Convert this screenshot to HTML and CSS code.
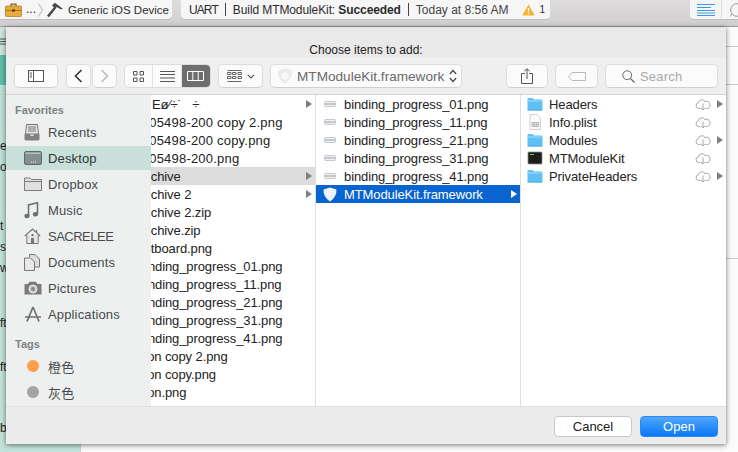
FILE: index.html
```html
<!DOCTYPE html>
<html lang="en">
<head>
    <meta charset="UTF-8">
    <title>Choose items to add</title>
    <link rel="stylesheet" href="styles.css">
</head>
<body>
<svg class="defs" width="0" height="0">
    <symbol id="folder" viewBox="0 0 16 14">
        <path d="M0.5 2.2 Q0.5 1 1.7 1 H5.6 L7 2.4 H14.4 Q15.5 2.4 15.5 3.5 V12.3 Q15.5 13.4 14.4 13.4 H1.6 Q0.5 13.4 0.5 12.3 Z" fill="#5fc0f3"/>
        <path d="M0.5 4 H15.5" stroke="#a5def9" stroke-width="1"/>
        <path d="M0.5 13 H15.5" stroke="#3fa3db" stroke-width="0.8"/>
    </symbol>
    <symbol id="cloud" viewBox="0 0 16 13">
        <path d="M5.2 10.5 H3.6 A2.9 2.9 0 0 1 3.3 4.8 A3.6 3.6 0 0 1 10 3.6 A3.2 3.2 0 0 1 12.6 10.5 H10.8" fill="none" stroke="#a6a6a6"/>
        <path d="M8 5.5 V12 M5.8 9.8 L8 12 L10.2 9.8" fill="none" stroke="#a6a6a6"/>
    </symbol>
    <symbol id="thumb" viewBox="0 0 12 6">
        <rect x="0.5" y="0.5" width="11" height="5" rx="1" fill="#eef1f5" stroke="#b4b4b4" stroke-width="0.7"/>
        <path d="M1 3 H11" stroke="#9aa0a8"/>
    </symbol>
</svg>

<div class="screen">
    <header class="xcode-bar">
        <div class="scheme-pill">
            <svg class="toolbox" width="17" height="14" viewBox="0 0 17 14">
                <path d="M6 3 V1.2 H11 V3" fill="none" stroke="#7d5a1c" stroke-width="1.2"/>
                <rect x="0.5" y="3" width="16" height="10.5" rx="1" fill="#e8aa3a" stroke="#a8781f" stroke-width="0.7"/>
                <path d="M0.5 7.5 H16.5" stroke="#a8781f"/>
                <rect x="7" y="6.2" width="3" height="2.6" fill="#6b4a14"/>
            </svg>
            <span class="crumb-dots">...</span>
            <svg class="crumb-sep" width="5" height="14" viewBox="0 0 5 14">
                <path d="M0.5 0.5 L4.5 7 L0.5 13.5" fill="none" stroke="#b5b5b5"/>
            </svg>
            <svg class="hammer" width="16" height="16" viewBox="0 0 16 16">
                <path d="M1 14.5 L8.5 5" stroke="#4a4a4a" stroke-width="2.4" fill="none"/>
                <path d="M5 3.2 L8 0.8 L15.5 6.5 L14.2 7.6 L9.5 5 L8 6.6 Z" fill="#4a4a4a"/>
            </svg>
            <span class="scheme-name">Generic iOS Device</span>
        </div>
        <div class="status-pill">
            <span class="status-target">UART</span>
            <i class="status-sep"></i>
            <span class="status-build">Build MTModuleKit: <b>Succeeded</b></span>
            <i class="status-sep"></i>
            <span class="status-time">Today at 8:56 AM</span>
            <svg class="warn" width="13" height="12" viewBox="0 0 13 12">
                <path d="M6.5 0.5 L12.8 11.5 H0.2 Z" fill="#f5b32e"/>
                <path d="M6.5 4 V8 M6.5 9 V10.3" stroke="#fff" stroke-width="1.3"/>
            </svg>
            <span class="warn-count">1</span>
        </div>
        <div class="editor-seg">
            <div class="editor-seg-item">
                <svg width="18" height="12" viewBox="0 0 18 12">
                    <path d="M0 .5 H18 M0 3.5 H14 M0 6.5 H18 M0 9 H18 M0 11.5 H18" stroke="#3f95ea"/>
                </svg>
            </div>
            <div class="editor-seg-item">
                <svg width="14" height="14" viewBox="0 0 14 14">
                    <circle cx="9" cy="7" r="6.3" fill="none" stroke="#999"/>
                    <path d="M4 11 L2 13.5" stroke="#999"/>
                </svg>
            </div>
        </div>
    </header>

    <div class="workspace">
        <aside class="nav-panel">
            <div class="nav-filter">
                <svg width="6" height="7" viewBox="0 0 6 7"><path d="M0 1 H6 M0 3.5 H6 M0 6 H6" stroke="#555"/></svg>
            </div>
            <div class="nav-current"></div>
            <div class="nav-frag frag-e">e</div>
            <div class="nav-frag">ol</div>
            <div class="nav-frag frag-t">t</div>
            <div class="nav-frag">sw</div>
            <div class="nav-frag">w</div>
            <div class="nav-frag frag-ft">ft</div>
            <div class="nav-frag frag-ft2">ft</div>
            <div class="nav-frag frag-b">b</div>
        </aside>
        <main class="editor">
            <div class="editor-line line-a"></div>
            <div class="editor-line line-b"></div>
            <div class="editor-line line-c"></div>
        </main>
    </div>

    <section class="dialog">
        <div class="dialog-title">Choose items to add:</div>

        <div class="toolbar">
            <div class="tool-btn btn-sidebar">
                <svg width="16" height="12" viewBox="0 0 16 12">
                    <rect x="0.5" y="0.5" width="15" height="11" fill="#fff" stroke="#555"/>
                    <path d="M5.5 0.5 V11.5 M1.8 3 H4 M1.8 5 H4 M1.8 7 H4" stroke="#555"/>
                </svg>
            </div>
            <div class="nav-pair">
                <div class="tool-btn btn-nav">
                    <svg width="9" height="14" viewBox="0 0 9 14"><path d="M7.5 1 L1.5 7 L7.5 13" fill="none" stroke="#333" stroke-width="1.6"/></svg>
                </div>
                <div class="tool-btn btn-nav">
                    <svg width="9" height="14" viewBox="0 0 9 14"><path d="M1.5 1 L7.5 7 L1.5 13" fill="none" stroke="#bbb" stroke-width="1.6"/></svg>
                </div>
            </div>
            <div class="view-seg">
                <div class="view-item">
                    <svg width="11" height="11" viewBox="0 0 11 11">
                        <path d="M.5 .5 H4 V4 H.5 Z M7 .5 H10.5 V4 H7 Z M.5 7 H4 V10.5 H.5 Z M7 7 H10.5 V10.5 H7 Z" fill="none" stroke="#555"/>
                    </svg>
                </div>
                <div class="view-item">
                    <svg width="15" height="11" viewBox="0 0 15 11"><path d="M0 .5 H15 M0 3.5 H15 M0 7 H15 M0 10.5 H15" stroke="#555"/></svg>
                </div>
                <div class="view-item view-active">
                    <svg width="17" height="10" viewBox="0 0 17 10">
                        <path d="M.5 .5 H16.5 V9.5 H.5 Z M5.8 .5 V9.5 M11.2 .5 V9.5" fill="none" stroke="#fff"/>
                    </svg>
                </div>
            </div>
            <div class="tool-btn btn-arrange">
                <svg width="15" height="12" viewBox="0 0 15 12">
                    <path d="M.5 .5 H14.5 M.5 2.5 H4 V4.5 H.5 Z M5.5 2.5 H9 V4.5 H5.5 Z M11 2.5 H14.5 V4.5 H11 Z M.5 6.5 H4 V8.5 H.5 Z M5.5 6.5 H9 V8.5 H5.5 Z M11 6.5 H14.5 V8.5 H11 Z M.5 11.5 H14.5" fill="none" stroke="#666"/>
                </svg>
                <svg width="8" height="5" viewBox="0 0 8 5"><path d="M.8 .8 L4 4 L7.2 .8" fill="none" stroke="#555" stroke-width="1.2"/></svg>
            </div>
            <div class="tool-btn btn-path">
                <svg width="16" height="16" viewBox="0 0 16 16">
                    <path d="M8 1 L14.5 3.5 Q14.5 11 8 15 Q1.5 11 1.5 3.5 Z" fill="#ececec" stroke="#e4e4e4"/>
                    <path d="M8 4 L11.5 6 V10 L8 12 L4.5 10 V6 Z" fill="#f8f8f8"/>
                </svg>
                <span class="path-name">MTModuleKit.framework</span>
                <svg class="updown" width="8" height="14" viewBox="0 0 8 14">
                    <path d="M.8 5 L4 1.5 L7.2 5 M.8 9 L4 12.5 L7.2 9" fill="none" stroke="#444" stroke-width="1.2"/>
                </svg>
            </div>
            <div class="tool-btn btn-share">
                <svg width="12" height="16" viewBox="0 0 12 16">
                    <path d="M4 5.5 H.5 V15.5 H11.5 V5.5 H8" fill="none" stroke="#555"/>
                    <path d="M6 11 V.8 M3.4 3.2 L6 .8 L8.6 3.2" fill="none" stroke="#555"/>
                </svg>
            </div>
            <div class="tool-btn btn-tag">
                <svg width="18" height="9" viewBox="0 0 18 9">
                    <path d="M4 .5 H17.5 V8.5 H4 L.5 4.5 Z" fill="none" stroke="#bbb"/>
                </svg>
            </div>
            <div class="tool-btn btn-search">
                <svg width="13" height="13" viewBox="0 0 13 13">
                    <circle cx="5.2" cy="5.2" r="4.4" fill="none" stroke="#666"/>
                    <path d="M8.4 8.4 L12.5 12.5" stroke="#666" stroke-width="1.3"/>
                </svg>
                <span class="search-hint">Search</span>
            </div>
        </div>

        <div class="browser">
            <nav class="sidebar">
                <div class="side-head">Favorites</div>
                <div class="side-row">
                    <svg class="side-icon" width="16" height="17" viewBox="0 0 16 17">
                        <path d="M2.5 .5 H13.5 L14.5 10 H1.5 Z" fill="#e4e4e4" stroke="#777"/>
                        <path d="M4 3 H12 M4 5 H12 M4 7 H12" stroke="#777"/>
                        <path d="M.5 10 H5.5 Q6 12 8 12 Q10 12 10.5 10 H15.5 V15 Q15.5 16.5 14 16.5 H2 Q.5 16.5 .5 15 Z" fill="#808080"/>
                    </svg>
                    <span>Recents</span>
                </div>
                <div class="side-row side-active">
                    <svg class="side-icon" width="18" height="14" viewBox="0 0 18 14">
                        <rect x="0.5" y="0.5" width="17" height="13" rx="1.5" fill="#84908d" stroke="#5f6a68"/>
                        <rect x="1.5" y="1.5" width="15" height="1.5" fill="#b4c0bd"/>
                        <path d="M7 11 H8 M9 11 H10 M11 11 H12" stroke="#e8e8e8"/>
                    </svg>
                    <span>Desktop</span>
                </div>
                <div class="side-row">
                    <svg class="side-icon" width="18" height="14" viewBox="0 0 18 14">
                        <path d="M.5 13.5 V1 H6 L7.5 2.5 H17.5 V13.5 Z" fill="#e0e0e0" stroke="#7d7d7d"/>
                        <path d="M.5 4.5 H17.5" stroke="#7d7d7d"/>
                    </svg>
                    <span>Dropbox</span>
                </div>
                <div class="side-row">
                    <svg class="side-icon" width="15" height="17" viewBox="0 0 15 17">
                        <path d="M4.5 14 V3 L13.5 .8 V12" fill="none" stroke="#707070" stroke-width="1.6"/>
                        <ellipse cx="3" cy="14" rx="2.6" ry="2.3" fill="#707070"/>
                        <ellipse cx="11.5" cy="12.3" rx="2.6" ry="2.3" fill="#707070"/>
                    </svg>
                    <span>Music</span>
                </div>
                <div class="side-row">
                    <svg class="side-icon" width="17" height="16" viewBox="0 0 17 16">
                        <path d="M.8 8 L8.5 1 L16.2 8 M12.5 2 V4.5" fill="none" stroke="#777" stroke-width="1.2"/>
                        <path d="M2.8 7 V15.5 H14.2 V7" fill="#e6e6e6" stroke="#777"/>
                        <rect x="7" y="10" width="3" height="5.5" fill="#777"/>
                        <circle cx="8.5" cy="7" r="1.2" fill="#777"/>
                    </svg>
                    <span class="side-caps">SACRELEE</span>
                </div>
                <div class="side-row">
                    <svg class="side-icon" width="16" height="17" viewBox="0 0 16 17">
                        <path d="M5.5 3 V.5 H11 L15.5 5 V13 H11" fill="#ddd" stroke="#777"/>
                        <path d="M.5 4 H6.5 L10.5 8 V16.5 H.5 Z" fill="#e8e8e8" stroke="#777"/>
                    </svg>
                    <span>Documents</span>
                </div>
                <div class="side-row">
                    <svg class="side-icon" width="18" height="14" viewBox="0 0 18 14">
                        <path d="M.5 3 H4 L5.5 .8 H12 L13.5 3 H17.5 V13.5 H.5 Z" fill="#7b7b7b"/>
                        <circle cx="9" cy="8" r="4" fill="#c9c9c9" stroke="#eee"/>
                        <circle cx="9" cy="8" r="2" fill="#8a8a8a"/>
                    </svg>
                    <span>Pictures</span>
                </div>
                <div class="side-row">
                    <svg class="side-icon" width="18" height="16" viewBox="0 0 18 16">
                        <path d="M9 1 L3 15.5 M9 1 L15 15.5 M1 11 H17" fill="none" stroke="#707070" stroke-width="1.7"/>
                    </svg>
                    <span>Applications</span>
                </div>
                <div class="side-head side-head-tags">Tags</div>
                <div class="side-row">
                    <i class="tag-dot dot-orange"></i>
                    <span class="cjk">橙色</span>
                </div>
                <div class="side-row">
                    <i class="tag-dot dot-gray"></i>
                    <span class="cjk">灰色</span>
                </div>
            </nav>

            <div class="column col-scrolled">
                <div class="file-row"><span class="name">&nbsp;&nbsp;&nbsp;&nbsp;Eø⁄÷˙&nbsp;&nbsp;&nbsp;÷</span><i class="arrow"></i></div>
                <div class="file-row"><span class="name name-long">&nbsp;105498-200 copy 2.png</span></div>
                <div class="file-row"><span class="name name-long">&nbsp;105498-200 copy.png</span></div>
                <div class="file-row"><span class="name name-long">&nbsp;105498-200.png</span></div>
                <div class="file-row row-parent"><span class="name">Archive</span><i class="arrow"></i></div>
                <div class="file-row"><span class="name">Archive 2</span><i class="arrow"></i></div>
                <div class="file-row"><span class="name">Archive 2.zip</span></div>
                <div class="file-row"><span class="name">Archive.zip</span></div>
                <div class="file-row"><span class="name">Artboard.png</span></div>
                <div class="file-row"><span class="name">binding_progress_01.png</span></div>
                <div class="file-row"><span class="name">binding_progress_11.png</span></div>
                <div class="file-row"><span class="name">binding_progress_21.png</span></div>
                <div class="file-row"><span class="name">binding_progress_31.png</span></div>
                <div class="file-row"><span class="name">binding_progress_41.png</span></div>
                <div class="file-row"><span class="name">icon copy 2.png</span></div>
                <div class="file-row"><span class="name">icon copy.png</span></div>
                <div class="file-row"><span class="name">icon.png</span></div>
            </div>

            <div class="column">
                <div class="file-row"><svg class="file-thumb" width="12" height="6"><use href="#thumb"/></svg><span class="name">binding_progress_01.png</span></div>
                <div class="file-row"><svg class="file-thumb" width="12" height="6"><use href="#thumb"/></svg><span class="name">binding_progress_11.png</span></div>
                <div class="file-row"><svg class="file-thumb" width="12" height="6"><use href="#thumb"/></svg><span class="name">binding_progress_21.png</span></div>
                <div class="file-row"><svg class="file-thumb" width="12" height="6"><use href="#thumb"/></svg><span class="name">binding_progress_31.png</span></div>
                <div class="file-row"><svg class="file-thumb" width="12" height="6"><use href="#thumb"/></svg><span class="name">binding_progress_41.png</span></div>
                <div class="file-row row-selected">
                    <svg class="file-icon-fw" width="14" height="15" viewBox="0 0 14 15">
                        <path d="M7 .5 L13.5 2.5 Q13.8 10 7 14.5 Q.2 10 .5 2.5 Z" fill="#eef3fa"/>
                    </svg>
                    <span class="name">MTModuleKit.framework</span>
                    <i class="arrow"></i>
                </div>
            </div>

            <div class="column col-last">
                <div class="item-row">
                    <svg class="item-icon" width="16" height="14"><use href="#folder"/></svg>
                    <span class="name">Headers</span>
                    <svg class="cloud" width="16" height="13"><use href="#cloud"/></svg>
                    <i class="arrow"></i>
                </div>
                <div class="item-row">
                    <svg class="item-icon" width="16" height="16" viewBox="0 0 16 16">
                        <path d="M3 .5 H10 L13.5 4 V15.5 H3 Z" fill="#fafafa" stroke="#cfcfcf"/>
                        <path d="M5 8.5 H11.5 V12.5 H5 Z M7.2 8.5 V12.5 M9.4 8.5 V12.5 M5 10.5 H11.5" fill="none" stroke="#b5b5b5"/>
                    </svg>
                    <span class="name">Info.plist</span>
                    <svg class="cloud" width="16" height="13"><use href="#cloud"/></svg>
                </div>
                <div class="item-row">
                    <svg class="item-icon" width="16" height="14"><use href="#folder"/></svg>
                    <span class="name">Modules</span>
                    <svg class="cloud" width="16" height="13"><use href="#cloud"/></svg>
                    <i class="arrow"></i>
                </div>
                <div class="item-row">
                    <svg class="item-icon" width="16" height="14" viewBox="0 0 16 14">
                        <rect x="1" y="1" width="14" height="12" rx="1" fill="#1c1c1c" stroke="#8a8a8a" stroke-width="0.8"/>
                        <path d="M3 3.5 H7" stroke="#5fd069"/>
                    </svg>
                    <span class="name">MTModuleKit</span>
                    <svg class="cloud" width="16" height="13"><use href="#cloud"/></svg>
                </div>
                <div class="item-row">
                    <svg class="item-icon" width="16" height="14"><use href="#folder"/></svg>
                    <span class="name">PrivateHeaders</span>
                    <svg class="cloud" width="16" height="13"><use href="#cloud"/></svg>
                    <i class="arrow"></i>
                </div>
            </div>
        </div>

        <footer class="dialog-foot">
            <button class="foot-btn btn-cancel" type="button">Cancel</button>
            <button class="foot-btn btn-open" type="button">Open</button>
        </footer>
    </section>
</div>
</body>
</html>
```

FILE: styles.css
```css
* {
    box-sizing: border-box;
}

html, body {
    margin: 0;
    padding: 0;
}

body {
    font-family: 'Liberation Sans', Arial, sans-serif;
    font-size: 13px;
    color: #2b2b2b;
    background: #fff;
}

.defs {
    position: absolute;
}

.screen {
    position: relative;
    width: 738px;
    height: 452px;
    overflow: hidden;
    display: flex;
    flex-direction: column;
}

/* Xcode window behind the sheet */
.xcode-bar {
    height: 27px;
    flex: none;
    display: flex;
    align-items: flex-start;
    background: linear-gradient(#dedcdc, #d0cece);
    border-bottom: 1px solid #9a9a9a;
    font-size: 12px;
    white-space: nowrap;
}

.scheme-pill {
    width: 172px;
    height: 19px;
    flex: none;
    display: flex;
    align-items: center;
    background: #f6f6f6;
    border-radius: 0 0 4px 0;
    box-shadow: 0 1px 0 #bdbdbd;
    padding-left: 5px;
}

.crumb-dots {
    margin-left: 4px;
    width: 8px;
    position: relative;
    top: -1px;
}

.crumb-sep {
    margin-left: 4px;
}

.hammer {
    margin: 0 5px 0 4px;
}

.scheme-name {
    font-size: 11.5px;
}

.status-pill {
    width: 369px;
    height: 19px;
    flex: none;
    margin-left: 9px;
    display: flex;
    align-items: center;
    background: #f6f6f6;
    border-radius: 0 0 4px 4px;
    box-shadow: 0 1px 0 #bdbdbd;
    padding-left: 8px;
}

.status-target {
    letter-spacing: -0.9px;
}

.status-sep {
    width: 1px;
    height: 13px;
    flex: none;
    background: #444;
    margin: 0 7px;
}

.status-build {
    letter-spacing: -0.1px;
}

.status-time {
    color: #444;
}

.warn {
    margin-left: 13px;
    flex: none;
}

.warn-count {
    margin-left: 5px;
    font-size: 10px;
}

.editor-seg {
    width: 48px;
    height: 19px;
    flex: none;
    margin-left: 140px;
    display: flex;
    background: #f6f6f6;
    border-radius: 0 0 0 4px;
    box-shadow: 0 1px 0 #bdbdbd;
}

.editor-seg-item {
    width: 32px;
    flex: none;
    display: flex;
    align-items: center;
    justify-content: center;
    border-right: 1px solid #ddd;
}

.editor-seg-item + .editor-seg-item {
    border-right: none;
    justify-content: flex-start;
    padding-left: 6px;
}

.workspace {
    flex: 1;
    display: flex;
    min-height: 0;
}

.nav-panel {
    width: 81px;
    flex: none;
    background: linear-gradient(#bde0d7, #c4e4db);
    border-right: 1px solid #d0d0d0;
    font-size: 12px;
    color: #1c1c1c;
}

.nav-filter {
    height: 28px;
    padding: 11px 0 0 0;
    background: #cfe5df;
    line-height: 0;
}

.nav-current {
    height: 30px;
    background: #5dbea5;
}

.nav-frag {
    height: 21px;
    line-height: 21px;
}

.frag-e {
    margin-top: 51px;
}

.frag-t {
    margin-top: 38px;
}

.frag-ft {
    margin-top: 34px;
}

.frag-ft2 {
    margin-top: 23px;
}

.frag-b {
    margin-top: 40px;
}

.editor {
    flex: 1;
    position: relative;
    background: #fbfbfb;
}

.editor-line {
    height: 1px;
    background: #c9c9c9;
}

.line-a {
    margin-top: 19px;
}

.line-b {
    margin-top: 37px;
}

.line-c {
    margin-top: 173px;
}

/* Open sheet */
.dialog {
    position: absolute;
    left: 6px;
    top: 27px;
    width: 720px;
    height: 417px;
    display: flex;
    flex-direction: column;
    background: #ececec;
    box-shadow: 0 1px 5px rgba(0, 0, 0, 0.55);
}

.dialog-title {
    height: 30px;
    flex: none;
    padding-top: 16px;
    line-height: 14px;
    font-size: 12px;
    text-align: center;
    color: #222;
    background: #e9e9e9;
}

.toolbar {
    height: 38px;
    flex: none;
    display: flex;
    align-items: flex-start;
    padding: 7px 0 0 8px;
    background: #efefef;
    border-bottom: 1px solid #d4d4d4;
}

.tool-btn {
    height: 24px;
    flex: none;
    display: flex;
    align-items: center;
    justify-content: center;
    background: #fbfbfb;
    border: 1px solid #dcdcdc;
    border-bottom-color: #cfcfcf;
    border-radius: 5px;
}

.btn-sidebar {
    width: 44px;
}

.nav-pair {
    display: flex;
    margin-left: 8px;
    gap: 1px;
}

.btn-nav {
    width: 25px;
}

.view-seg {
    width: 87px;
    height: 24px;
    margin-left: 7px;
    display: flex;
    background: #fbfbfb;
    border: 1px solid #dcdcdc;
    border-radius: 5px;
    overflow: hidden;
}

.view-item {
    width: 29px;
    display: flex;
    align-items: center;
    justify-content: center;
    border-right: 1px solid #e2e2e2;
}

.view-active {
    background: #6e6e6e;
    border-right: none;
}

.btn-arrange {
    width: 45px;
    margin-left: 7px;
    gap: 5px;
}

.btn-path {
    width: 192px;
    margin-left: 7px;
    justify-content: flex-start;
    padding-left: 6px;
    white-space: nowrap;
}

.path-name {
    margin-left: 4px;
    font-size: 13.6px;
    color: #6a6a6a;
}

.updown {
    margin-left: 5px;
    flex: none;
}

.btn-share {
    width: 42px;
    margin-left: 44px;
}

.btn-tag {
    width: 43px;
    margin-left: 7px;
}

.btn-search {
    width: 113px;
    margin-left: 7px;
    justify-content: flex-start;
    padding-left: 16px;
}

.search-hint {
    margin-left: 5px;
    color: #a9a9a9;
    letter-spacing: 0.2px;
}

.browser {
    flex: 1;
    display: flex;
    min-height: 0;
}

.sidebar {
    position: relative;
    width: 145px;
    flex: none;
    padding-top: 8px;
    background: #eef0f0;
}

.side-head {
    height: 14px;
    line-height: 14px;
    margin: 0 0 3px 9px;
    font-size: 11px;
    font-weight: bold;
    color: #7f8283;
}

.side-head-tags {
    margin-top: 11px;
}

.side-row {
    height: 24px;
    margin-bottom: 2px;
    display: flex;
    align-items: center;
    color: #464a4c;
    letter-spacing: 0.15px;
}

.side-row span {
    position: absolute;
    left: 42px;
}

.side-row .side-caps {
    letter-spacing: -0.5px;
}

.side-active {
    background: #c9dfd9;
    color: #2c3a38;
}

.side-icon {
    margin-left: 18px;
}

.cjk {
    font-family: 'Noto Sans CJK SC', sans-serif;
}

.tag-dot {
    width: 12px;
    height: 12px;
    margin-left: 21px;
    border-radius: 50%;
}

.dot-orange {
    background: #fd9f4a;
}

.dot-gray {
    background: #a3a3a5;
}

.column {
    flex: none;
    background: #fff;
    border-left: 1px solid #dedede;
    overflow: hidden;
    letter-spacing: -0.1px;
}

.col-scrolled {
    width: 164px;
    border-left: none;
}

.column + .column {
    width: 205px;
}

.column + .column.col-last {
    width: 206px;
}

.file-row,
.item-row {
    height: 18px;
    display: flex;
    align-items: center;
    color: #222;
    white-space: nowrap;
    position: relative;
}

.col-scrolled .name {
    margin-left: -13px;
}

.col-scrolled .name-long {
    letter-spacing: 0.2px;
}

.file-thumb {
    margin-left: 8px;
}

.file-thumb + .name {
    margin-left: 8px;
}

.file-icon-fw {
    margin-left: 7px;
}

.file-icon-fw + .name {
    margin-left: 7px;
}

.row-parent {
    background: #dcdcdc;
}

.row-selected {
    background: #0a64cf;
    color: #fff;
}

.arrow {
    position: absolute;
    right: 3px;
    top: 5px;
    width: 0;
    height: 0;
    border-left: 6px solid #808080;
    border-top: 4px solid transparent;
    border-bottom: 4px solid transparent;
}

.row-selected .arrow {
    border-left-color: #fff;
}

.item-icon {
    margin-left: 6px;
}

.item-icon + .name {
    margin-left: 6px;
}

.cloud {
    position: absolute;
    right: 15px;
    top: 3px;
}

.dialog-foot {
    height: 38px;
    flex: none;
    display: flex;
    gap: 8px;
    justify-content: flex-end;
    padding: 9px 8px 0 0;
    background: #ececec;
    border-top: 1px solid #e0e0e0;
}

.foot-btn {
    width: 78px;
    height: 21px;
    padding: 0;
    font-family: inherit;
    font-size: 13px;
    border-radius: 4px;
}

.btn-cancel {
    background: #fff;
    border: 1px solid #c8c8c8;
    color: #222;
}

.btn-open {
    background: linear-gradient(#50a6fb, #0a78f6);
    border: 1px solid #2a8af5;
    color: #fff;
}
```
